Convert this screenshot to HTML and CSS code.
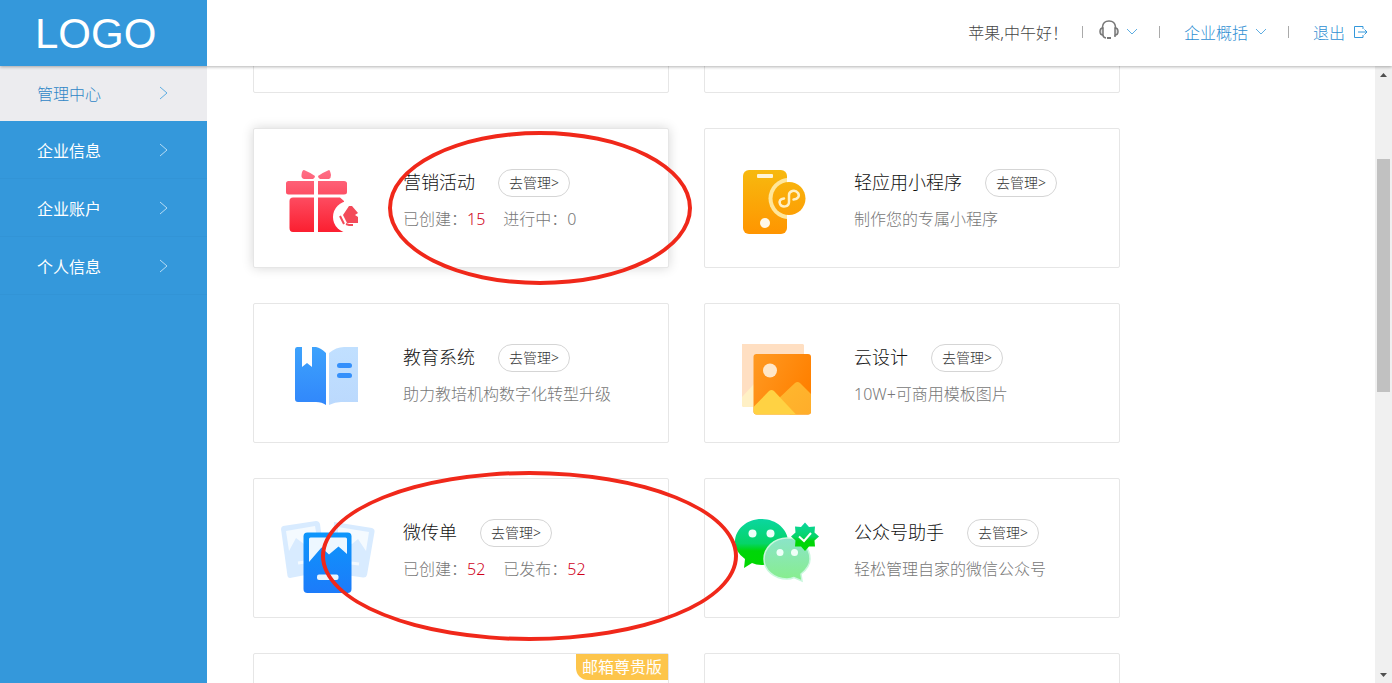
FILE: index.html
```html
<!DOCTYPE html>
<html lang="zh-CN">
<head>
  <meta charset="UTF-8">
  <meta name="viewport" content="width=device-width, initial-scale=1">
  <title>管理中心</title>
  <link rel="stylesheet" href="styles.css">
</head>
<body>
  <header class="header">
    <a class="logo" href="#">LOGO</a>
    <div class="user-bar">
      <span class="greeting">苹果,中午好！</span>
      <i class="sep"></i>
      <button class="service" aria-label="客服">
        <svg width="22" height="26" viewBox="0 0 22 26" fill="none" stroke="#777" stroke-width="1.500">
          <path d="M4.500 9.500V8Q5 2 11 2T17.500 8V9.500"/>
          <path d="M5 9C1 9 1 16 5 16zM17 9C21 9 21 16 17 16z" fill="#ddd"/>
          <path d="M5 16Q5 18.500 8 19M17 16V18"/>
          <path d="M9 19h4" stroke-width="2"/>
        </svg>
        <svg class="down" width="12" height="8" viewBox="0 0 12 8"><path d="M1 1l5 5 5-5"/></svg>
      </button>
      <i class="sep"></i>
      <button class="company">企业概括
        <svg class="down" width="12" height="8" viewBox="0 0 12 8"><path d="M1 1l5 5 5-5"/></svg>
      </button>
      <i class="sep"></i>
      <a class="logout" href="#">退出
        <svg width="15" height="14" viewBox="0 0 15 14" fill="none" stroke="#3498db"><path d="M10 4V1.500H1.500v11H10V10M5 7h9M11.500 4.500L14 7l-2.500 2.500"/></svg>
      </a>
    </div>
  </header>

  <div class="layout">
    <nav class="sidebar">
      <a class="active" href="#">管理中心 <svg width="9" height="14" viewBox="0 0 9 14"><path d="M1 1l7 6-7 6"/></svg></a>
      <a href="#">企业信息 <svg width="9" height="14" viewBox="0 0 9 14"><path d="M1 1l7 6-7 6"/></svg></a>
      <a href="#">企业账户 <svg width="9" height="14" viewBox="0 0 9 14"><path d="M1 1l7 6-7 6"/></svg></a>
      <a href="#">个人信息 <svg width="9" height="14" viewBox="0 0 9 14"><path d="M1 1l7 6-7 6"/></svg></a>
    </nav>

    <main class="content">
      <div class="cards">
        <section class="card"></section>
        <section class="card"></section>

        <section class="card hover">
          <svg class="icon" viewBox="0 0 149 139">
            <defs>
              <linearGradient id="red" gradientUnits="userSpaceOnUse" x1="0" y1="40" x2="0" y2="103"><stop offset="0" stop-color="#ff7088"/><stop offset="1" stop-color="#fb1f30"/></linearGradient>
            </defs>
            <g fill="url(#red)">
              <path d="M50 41Q55 43 61 47Q61 49 59 50H50Q47 49 47.500 46Q48 41 50 41zM75 41Q70 43 64 47Q64 49 66 50H75Q77 49 77 46Q76 41 75 41z"/>
              <path d="M34.500 52H60V65.500H34.500Q32 65.500 32 63V54.500Q32 52 34.500 52zM64 52H90Q93 52 93 54.500V63Q93 65.500 90 65.500H64z"/>
              <path d="M39 68.500H60V103H39Q35.500 103 35.500 99V72Q35.500 68.500 39 68.500zM64 68.500H86L90 72V103H64z"/>
            </g>
            <circle cx="95" cy="88" r="16" fill="#fff"/>
            <path d="M95 77L98 77L104 84L101 86L104 88V94L93 94L89 86z" fill="#f34a59"/>
            <path d="M86 87l4 8M92 95l3 1h4" stroke="#f34a59" stroke-width="2" fill="none"/>
          </svg>
          <div class="info">
            <div class="head"><h2>营销活动</h2><button>去管理&gt;</button></div>
            <p><span>已创建：<b>15</b></span><span>进行中：0</span></p>
          </div>
        </section>

        <section class="card">
          <svg class="icon" viewBox="0 0 149 139">
            <defs>
              <linearGradient id="amber" gradientUnits="userSpaceOnUse" x1="0" y1="41" x2="0" y2="105"><stop offset="0" stop-color="#f7b90f"/><stop offset="1" stop-color="#ff9500"/></linearGradient>
              <clipPath id="phone"><rect x="38" y="41" width="44" height="64" rx="6"/></clipPath>
            </defs>
            <rect x="38" y="41" width="44" height="64" rx="6" fill="url(#amber)"/>
            <rect x="52" y="45" width="16" height="4" rx="1" fill="#fff4d6"/>
            <circle cx="60" cy="94" r="5" fill="#fff8e8"/>
            <circle cx="84" cy="69.500" r="20.500" fill="#ffe69a" clip-path="url(#phone)"/>
            <circle cx="84" cy="69.500" r="16.500" fill="url(#amber)"/>
            <path d="M88.500 70.500C93 70 95 67 93 64C90 60 84 62 84 66V73C84 78 77 79 75 75C74 72 75 70 79 69.500" fill="none" stroke="#fff0c4" stroke-width="2.500" stroke-linecap="round"/>
          </svg>
          <div class="info">
            <div class="head"><h2>轻应用小程序</h2><button>去管理&gt;</button></div>
            <p>制作您的专属小程序</p>
          </div>
        </section>

        <section class="card">
          <svg class="icon" viewBox="0 0 149 139">
            <defs>
              <linearGradient id="blue" x1="0" y1="0" x2="0" y2="1"><stop offset="0" stop-color="#3da2fc"/><stop offset="1" stop-color="#3187fb"/></linearGradient>
              <linearGradient id="pale" x1="0" y1="0" x2="0" y2="1"><stop offset="0" stop-color="#c1e0ff"/><stop offset="1" stop-color="#bbd9fd"/></linearGradient>
            </defs>
            <path d="M43 43H48V63L53 59L58 63V43H62Q67 44 72 49V101Q68 98 62 98H44Q41 98 41 95V45.500Q41 43 43 43z" fill="url(#blue)"/>
            <path d="M75 49Q82 43 90 43H104V98H87Q81 98 75 101z" fill="url(#pale)"/>
            <rect x="83" y="59" width="15" height="5" rx="2.500" fill="#3590fb"/>
            <rect x="83" y="69" width="15" height="5" rx="2.500" fill="#3590fb"/>
          </svg>
          <div class="info">
            <div class="head"><h2>教育系统</h2><button>去管理&gt;</button></div>
            <p>助力教培机构数字化转型升级</p>
          </div>
        </section>

        <section class="card">
          <svg class="icon" viewBox="0 0 149 139">
            <defs>
              <linearGradient id="orange" x1="0" y1="0" x2="1" y2="0.500"><stop offset="0" stop-color="#ff9a23"/><stop offset="1" stop-color="#ff8000"/></linearGradient>
              <linearGradient id="sand" x1="0" y1="0" x2="1" y2="1"><stop offset="0" stop-color="#ffb82e"/><stop offset="1" stop-color="#ffad2a"/></linearGradient>
            </defs>
            <path d="M37 40H98L99 41V103H39Q37 103 37 101z" fill="#ffdfc2"/>
            <path d="M37 93L49 80V103H39Q37 103 37 101z" fill="#fff0c5"/>
            <rect x="48.500" y="50" width="57.500" height="60.500" rx="3" fill="url(#orange)"/>
            <path d="M72 96L90 79Q92.500 77 95 79L106 90V107.500Q106 110.500 103 110.500H85z" fill="url(#sand)"/>
            <path d="M48.500 103L64 87Q66.500 85 69 87L91 110.500H51.500Q48.500 110.500 48.500 107z" fill="#ffd243"/>
            <circle cx="65" cy="66.500" r="7" fill="#ffe7c9"/>
          </svg>
          <div class="info">
            <div class="head"><h2>云设计</h2><button>去管理&gt;</button></div>
            <p>10W+可商用模板图片</p>
          </div>
        </section>

        <section class="card">
          <svg class="icon" viewBox="0 0 149 139">
            <defs>
              <linearGradient id="azure" x1="0" y1="0" x2="0" y2="1"><stop offset="0" stop-color="#0d96fb"/><stop offset="1" stop-color="#1c7bfa"/></linearGradient>
            </defs>
            <g fill="#d8ebff">
              <path d="M29 47L62 42Q65 42 66 45L72 92L36 99Q34 99 33.500 97L27 50Q27 48 29 47z"/>
              <path d="M80 43L118 49Q121 50 120.500 53L113 96Q112 99 109 98.500L78 94z"/>
            </g>
            <path d="M32 52L61 47L64 65L57 66L50 65L42 59L35 72z" fill="#f4faff"/>
            <path d="M84 48L115 53L112 72L104 60L98 65L84 60z" fill="#f4faff"/>
            <path d="M44 84l7-1M97 84l8 1" stroke="#f4faff" stroke-width="3"/>
            <rect x="49.500" y="53.500" width="48" height="60.500" rx="4" fill="url(#azure)"/>
            <path d="M55 60Q55 58.500 56.500 58.500H91.500Q93 58.500 93 60V75L84.500 67.500L75 75.500L67.500 68.500L55 83z" fill="#edf7ff"/>
            <rect x="63" y="95.500" width="21.500" height="5.500" rx="2" fill="#e8f5ff"/>
          </svg>
          <div class="info">
            <div class="head"><h2>微传单</h2><button>去管理&gt;</button></div>
            <p><span>已创建：<b>52</b></span><span>已发布：<b>52</b></span></p>
          </div>
        </section>

        <section class="card">
          <svg class="icon" viewBox="0 0 149 139">
            <defs>
              <linearGradient id="green" x1="0" y1="0" x2="0" y2="1"><stop offset="0" stop-color="#0bd6a0"/><stop offset="0.500" stop-color="#05d468"/><stop offset="0.650" stop-color="#00d509"/><stop offset="1" stop-color="#00d800"/></linearGradient>
              <linearGradient id="mint" x1="0" y1="0" x2="0" y2="1"><stop offset="0" stop-color="#8be4c9"/><stop offset="1" stop-color="#87ee8c"/></linearGradient>
            </defs>
            <path d="M56.500 40C71 40 83 50 83 63S71 86 56.500 86Q51 86 47 84L39 89L40 80Q30 73 30 63C30 50 42 40 56.500 40z" fill="url(#green)"/>
            <circle cx="47.500" cy="54.500" r="4" fill="#effff8"/>
            <circle cx="65.500" cy="54.500" r="4" fill="#effff8"/>
            <path d="M82 59C95 59 105 68 105 80Q105 88 96 95L97 102L89 98.500Q86 100 82 100C69 100 59 91 59 80S69 59 82 59z" fill="url(#mint)" stroke="#c9f7dd" stroke-width="1.500"/>
            <circle cx="75" cy="73.500" r="3.500" fill="#effff8"/>
            <circle cx="89.500" cy="73.500" r="3.500" fill="#effff8"/>
            <path d="M100 43.500L104 48L110 47.500L109.500 53.500L114 57.500L109.500 61.500L110 67.500L104 67.500L100 72L96 67.500L90 67.500L90.500 61.500L86 57.500L90.500 53.500L90 47.500L96 48z" fill="url(#green)"/>
            <path d="M94 57.500l5 4.500 7-8" stroke="#fff" stroke-width="2" fill="none"/>
          </svg>
          <div class="info">
            <div class="head"><h2>公众号助手</h2><button>去管理&gt;</button></div>
            <p>轻松管理自家的微信公众号</p>
          </div>
        </section>

        <section class="card"><span class="tag">邮箱尊贵版</span></section>
        <section class="card"></section>
      </div>
      <div class="mark mark-activity"></div>
      <div class="mark mark-flyer"></div>
    </main>

    <div class="scrollbar">
      <svg width="17" height="17" viewBox="0 0 17 17"><path d="M5 11h7L8.500 7z"/></svg>
      <div class="track"><div class="thumb"></div></div>
      <svg width="17" height="17" viewBox="0 0 17 17"><path d="M5 7h7L8.500 11z"/></svg>
    </div>
  </div>
</body>
</html>
```
FILE: styles.css
```css
* {
  box-sizing: border-box;
}
body {
  margin: 0;
  height: 100vh;
  display: flex;
  flex-direction: column;
  overflow: hidden;
  font-family: "Noto Sans", "Noto Sans CJK SC", sans-serif;
  font-size: 16px;
  font-weight: 300;
  color: #333;
  background: #fff;
}
a {
  text-decoration: none;
}
button {
  font: inherit;
  padding: 0;
  border: none;
  background: none;
  cursor: pointer;
}

/* header */
.header {
  position: relative;
  z-index: 2;
  flex: none;
  display: flex;
  justify-content: space-between;
  height: 66px;
  background: #fff;
  box-shadow: 0 1px 3px rgba(0, 0, 0, 0.3);
}
.logo {
  width: 207px;
  padding-left: 35px;
  background: #3498db;
  color: #fff;
  font-family: "Liberation Sans", Arial, sans-serif;
  font-size: 42px;
  font-weight: 400;
  line-height: 68px;
}
.user-bar {
  display: flex;
  align-items: center;
  padding: 0 24px 2px 0;
}
.greeting {
  color: #444;
}
.sep {
  width: 1px;
  height: 12px;
  background: #aaa;
}
.greeting + .sep {
  margin: 0 15px 0 14px;
}
.service,
.company,
.logout {
  display: flex;
  align-items: center;
  color: #2f8fd3;
}
.service {
  gap: 6px;
  margin-right: 21px;
}
.company {
  gap: 7px;
  margin: 0 21px 0 24px;
}
.logout {
  gap: 8px;
  margin-left: 24px;
}
.down {
  fill: none;
  stroke: #5dade2;
}

/* layout */
.layout {
  flex: 1;
  display: flex;
  min-height: 0;
}
.sidebar {
  flex: none;
  width: 207px;
  background: #3498db;
}
.sidebar a {
  display: flex;
  align-items: center;
  justify-content: space-between;
  height: 58px;
  padding: 0 39px 0 37px;
  border-bottom: 1px solid #3294d6;
  color: #fff;
  font-weight: 400;
}
.sidebar svg {
  fill: none;
  stroke: #b5dcf5;
}
.sidebar .active {
  height: 55px;
  padding-bottom: 2px;
  border: none;
  background: #ececef;
  color: #2f86c6;
  font-weight: 300;
}
.sidebar .active svg {
  stroke: #5dade2;
}
.content {
  position: relative;
  flex: 1;
  overflow: hidden;
}

/* cards, list is scrolled down by part of the first row */
.cards {
  display: grid;
  grid-template-columns: 1fr 1fr;
  grid-auto-rows: 140px;
  gap: 35px;
  max-width: 867px;
  margin: -113px 46px 0;
}
.card {
  position: relative;
  display: flex;
  border: 1px solid #e6e6e6;
  border-radius: 2px;
  background: #fff;
}
.card.hover {
  box-shadow: 0 0 12px rgba(0, 0, 0, 0.16);
}
.icon {
  flex: none;
  width: 149px;
  height: 139px;
}
.info {
  padding-top: 40px;
}
.head {
  display: flex;
  align-items: center;
  gap: 23px;
}
.head h2 {
  margin: 0;
  padding-bottom: 2px;
  font-size: 18px;
  font-weight: 300;
  line-height: 26px;
  color: #111;
}
.head button {
  height: 28px;
  padding: 0 10px;
  border: 1px solid #d5d5d5;
  border-radius: 14px;
  font-size: 14px;
  line-height: 26px;
  color: #333;
}
.info p {
  display: flex;
  gap: 18px;
  margin: 10px 0 0;
  line-height: 24px;
  color: #777;
}
.info b {
  font-weight: 300;
  color: #d0021b;
}
.tag {
  position: absolute;
  top: 0;
  right: 0;
  padding: 0 6px;
  border-radius: 0 0 0 12px;
  background: #fdc54b;
  color: #fff;
  font-weight: 400;
  line-height: 26px;
}

/* red circles over the cards */
.mark {
  position: absolute;
  border: 4px solid #f0281a;
  border-radius: 50%;
  pointer-events: none;
}
.mark-activity {
  left: 181px;
  top: 65px;
  width: 304px;
  height: 154px;
}
.mark-flyer {
  left: 114px;
  top: 405px;
  width: 417px;
  height: 170px;
}

/* scrollbar */
.scrollbar {
  flex: none;
  display: flex;
  flex-direction: column;
  width: 17px;
  background: #f0f0f0;
}
.scrollbar svg {
  fill: #505050;
}
.track {
  flex: 1;
  padding: 76px 2px 0;
}
.thumb {
  height: 46%;
  background: #c1c1c1;
}
```
